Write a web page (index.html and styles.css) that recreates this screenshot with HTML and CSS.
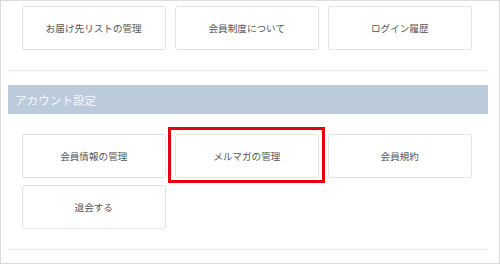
FILE: index.html
```html
<!DOCTYPE html>
<html lang="ja">
<head>
<meta charset="utf-8">
<link rel="stylesheet" href="styles.css">
</head>
<body>
<div class="frame">
  <div class="grid top-grid">
    <div class="btn">お届け先リストの管理</div>
    <div class="btn">会員制度について</div>
    <div class="btn">ログイン履歴</div>
  </div>
  <hr class="divider">
  <div class="section-head">アカウント設定</div>
  <div class="grid">
    <div class="btn">会員情報の管理</div>
    <div class="btn highlighted">メルマガの管理<span class="mark"></span></div>
    <div class="btn">会員規約</div>
    <div class="btn">退会する</div>
  </div>
  <hr class="divider bottom">
</div>
</body>
</html>
```

FILE: styles.css
```css
html, body {
  margin: 0;
  padding: 0;
  background: #fff;
}
body {
  font-family: "Noto Sans CJK JP", "Noto Sans", sans-serif;
}
.frame {
  box-sizing: border-box;
  width: 500px;
  height: 264px;
  border: 1px solid #dcdcdc;
  padding: 5px 11px 0 7px;
}
.grid {
  display: grid;
  grid-template-columns: repeat(3, 143.5px);
  grid-auto-rows: 44px;
  column-gap: 9.5px;
  row-gap: 7px;
  padding-left: 14px;
}
.btn {
  position: relative;
  box-sizing: border-box;
  border: 1px solid #e3e3e3;
  border-radius: 3px;
  display: flex;
  align-items: center;
  justify-content: center;
  font-size: 9.6px;
  color: #555;
  background: #fff;
}
.divider {
  margin: 20px 0 0 0;
  border: 0;
  height: 1px;
  background: #ebebeb;
}
.section-head {
  margin-top: 14px;
  height: 29px;
  background: #bccbdc;
  color: #f4f7fa;
  font-size: 11.6px;
  display: flex;
  align-items: center;
  padding-left: 7px;
  margin-bottom: 20px;
}
.mark {
  position: absolute;
  left: -8px;
  top: -8px;
  right: -7px;
  bottom: -6px;
  border: 3px solid #e50012;
}
```
